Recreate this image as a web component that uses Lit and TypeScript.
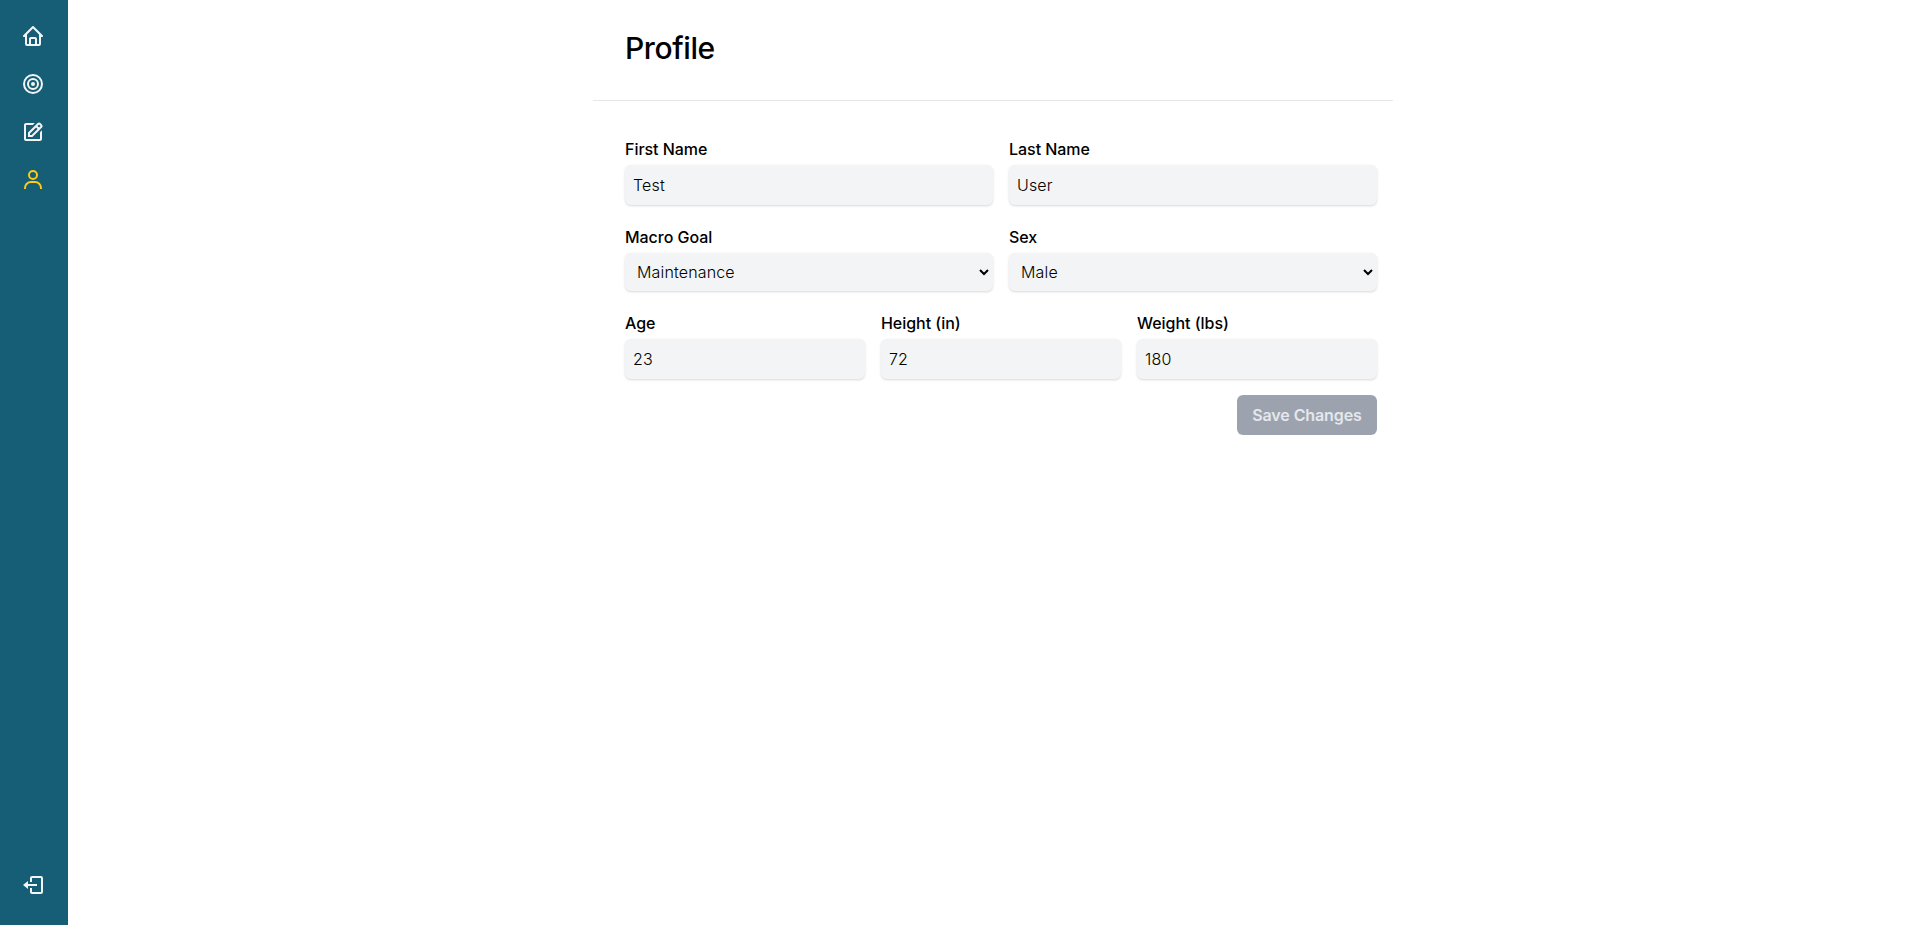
import { LitElement, html, css, svg } from "lit";
import { customElement } from "lit/decorators.js";

const icons = {
  home: svg`<path d="M3 13h1v7c0 1.103.897 2 2 2h12c1.103 0 2-.897 2-2v-7h1a1 1 0 0 0 .707-1.707l-9-9a.999.999 0 0 0-1.414 0l-9 9A1 1 0 0 0 3 13zm7 7v-5h4v5h-4zm2-15.586 6 6V15l.001 5H16v-5c0-1.103-.897-2-2-2h-4c-1.103 0-2 .897-2 2v5H6v-9.586l6-6z"/>`,
  goal: svg`<g fill="none" stroke="currentColor" stroke-width="2"><circle cx="12" cy="12" r="9"/><circle cx="12" cy="12" r="5"/></g><circle cx="12" cy="12" r="2"/>`,
  edit: svg`<path d="m7 17.013 4.413-.015 9.632-9.54c.378-.378.586-.88.586-1.414s-.208-1.036-.586-1.414l-1.586-1.586c-.756-.756-2.075-.752-2.825-.003L7 12.583v4.43zM18.045 4.458l1.589 1.583-1.597 1.582-1.586-1.585 1.594-1.58zM9 13.417l6.03-5.973 1.586 1.586-6.029 5.971L9 15.006v-1.589z"/><path d="M5 21h14c1.103 0 2-.897 2-2v-8.668l-2 2V19H8.158c-.026 0-.053.01-.079.01-.033 0-.066-.009-.1-.01H5V5h6.847l2-2H5c-1.103 0-2 .897-2 2v14c0 1.103.897 2 2 2z"/>`,
  user: svg`<path d="M12 2a5 5 0 1 0 5 5 5 5 0 0 0-5-5zm0 8a3 3 0 1 1 3-3 3 3 0 0 1-3 3zm9 11v-1a7 7 0 0 0-7-7h-4a7 7 0 0 0-7 7v1h2v-1a5 5 0 0 1 5-5h4a5 5 0 0 1 5 5v1z"/>`,
  exit: svg`<path d="m2 12 5 4v-3h9v-2H7V8z"/><path d="M20 3h-9c-1.103 0-2 .897-2 2v4h2V5h9v14h-9v-4H9v4c0 1.103.897 2 2 2h9c1.103 0 2-.897 2-2V5c0-1.103-.897-2-2-2z"/>`,
};

const icon = (glyph: unknown) =>
  html`<svg width="24" height="24" viewBox="0 0 24 24" fill="currentColor">${glyph}</svg>`;

@customElement("app-root")
export class AppRoot extends LitElement {
  static styles = css`
    * { box-sizing: border-box; }
    :host {
      display: flex;
      height: 100vh;
      background: #fff;
      color: #000;
      font: 300 16px/24px Inter, sans-serif;
    }
    .sidebar {
      width: 68px;
      flex: none;
      display: flex;
      flex-direction: column;
      justify-content: space-between;
      padding: 24px 0 28px 21px;
      background: #155e75;
      color: #f3f4f6;
    }
    .links { display: flex; flex-direction: column; gap: 24px; }
    a { display: block; height: 24px; width: 24px; color: inherit; }
    a.active { color: #facc15; }
    svg { display: block; }
    main { width: 800px; margin: 0 auto; }
    header { height: 101px; padding: 28px 32px; border-bottom: 1px solid #e5e7eb; }
    h1 { margin: 0; font-size: 30px; line-height: 40px; font-weight: 500; letter-spacing: -0.4px; }
    form { display: flex; flex-direction: column; padding: 36px 16px 0 32px; }
    .row { display: flex; gap: 16px; }
    .names { height: 88px; }
    .choices { height: 86px; }
    .body { height: 84px; }
    label { flex: 1 1 0; min-width: 0; }
    .caption { display: block; padding-bottom: 4px; font-weight: 500; letter-spacing: -0.04px; }
    input, select {
      display: block;
      width: 100%;
      margin: 0;
      border: 0;
      border-radius: 6px;
      background-color: #f3f4f6;
      color: #000;
      font: inherit;
      letter-spacing: 0.15px;
      box-shadow: 0 1px 3px rgba(0, 0, 0, .1), 0 1px 2px rgba(0, 0, 0, .06);
    }
    input { height: 40px; padding: 8px; }
    select { height: 38px; padding: 7px 8px; border-right: 1px solid transparent; }
    button {
      align-self: flex-end;
      width: 140px;
      height: 40px;
      padding: 0;
      border: 0;
      border-radius: 6px;
      background: #9ca3af;
      color: #e5e7eb;
      font: 600 16px/24px Inter, sans-serif;
      letter-spacing: -0.1px;
    }
  `;

  private field(label: string, value: string) {
    return html`<label><span class="caption">${label}</span><input type="text" .value=${value} /></label>`;
  }

  private choice(label: string, value: string) {
    return html`<label><span class="caption">${label}</span><select><option>${value}</option></select></label>`;
  }

  render() {
    return html`
      <nav class="sidebar">
        <div class="links">
          <a aria-label="Home">${icon(icons.home)}</a>
          <a aria-label="Goals">${icon(icons.goal)}</a>
          <a aria-label="Edit">${icon(icons.edit)}</a>
          <a class="active" aria-label="Profile">${icon(icons.user)}</a>
        </div>
        <a aria-label="Log out">${icon(icons.exit)}</a>
      </nav>
      <main>
        <header><h1>Profile</h1></header>
        <form>
          <div class="row names">${this.field("First Name", "Test")}${this.field("Last Name", "User")}</div>
          <div class="row choices">${this.choice("Macro Goal", "Maintenance")}${this.choice("Sex", "Male")}</div>
          <div class="row body">${this.field("Age", "23")}${this.field("Height (in)", "72")}${this.field("Weight (lbs)", "180")}</div>
          <button type="button" disabled>Save Changes</button>
        </form>
      </main>
    `;
  }
}
